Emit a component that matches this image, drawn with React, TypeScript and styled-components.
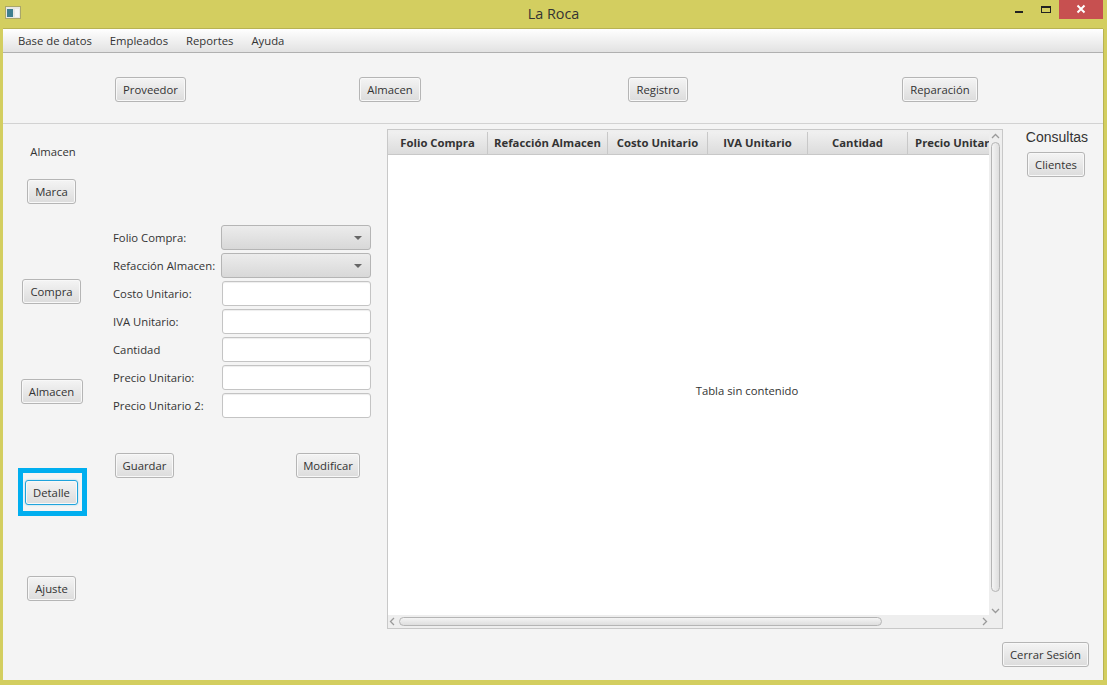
import React from "react";
import styled, { createGlobalStyle } from "styled-components";

const Global = createGlobalStyle`
  html, body { margin: 0; padding: 0; background: #d3ce60; }
  * { box-sizing: border-box; }
`;

const font = `"Open Sans", "Noto Sans", "Liberation Sans", sans-serif`;
const size = "11.3px";

const Frame = styled.div`
  width: 1107px;
  height: 685px;
  background: #d3ce60;
  display: flex;
  flex-direction: column;
  font-family: ${font};
  font-size: ${size};
  color: #333;
  overflow: hidden;
`;
const TitleBar = styled.div`
  height: 29px;
  flex: none;
  display: grid;
  grid-template-columns: 200px 1fr 200px;
  align-items: start;
`;
const TitleIcon = styled.svg`
  margin: 6px 0 0 5px;
  display: block;
`;
const Title = styled.div`
  text-align: center;
  font-size: 14.4px;
  line-height: 28px;
  color: #333;
`;
const Controls = styled.div`
  display: flex;
  justify-content: flex-end;
  padding-right: 4px;
`;
const Ctl = styled.div<{ $w: number; $red?: boolean }>`
  width: ${(p) => p.$w}px;
  height: 19px;
  background: ${(p) => (p.$red ? "#c75050" : "transparent")};
  display: flex;
  align-items: flex-start;
  justify-content: center;
`;
const Window = styled.div`
  width: 1100px;
  height: 651px;
  margin-left: 3px;
  background: #f4f4f4;
  display: flex;
  flex-direction: column;
  box-shadow: 0 -1px 0 #b8b353, 1px 0 0 #b8b353;
`;
const MenuBar = styled.div`
  height: 24px;
  flex: none;
  display: flex;
  padding-left: 15px;
  gap: 18px;
  align-items: center;
  background: linear-gradient(#ffffff, #e2e2e2);
  border-bottom: 1px solid #b0b0b0;
  color: #333;
  line-height: 23px;
`;
const MenuItem = styled.span``;
const Toolbar = styled.div`
  height: 71px;
  flex: none;
  padding: 24px 0 0 112px;
  display: grid;
  grid-template-columns: 244px 269px 274px auto;
  align-items: start;
  justify-items: start;
  border-bottom: 1px solid #d2d2d2;
`;
const Btn = styled.button<{ $w: number; $focus?: boolean }>`
  width: ${(p) => p.$w}px;
  height: 25px;
  padding: 0;
  font: ${size} ${font};
  color: #333;
  border-radius: 3px;
  background: linear-gradient(#f4f4f4, #dcdcdc);
  border: 1px solid ${(p) => (p.$focus ? "#1fa3dc" : "#b5b5b5")};
  box-shadow: inset 0 0 0 1px #f8f8f8${(p) => (p.$focus ? ", 0 0 2px #8fd3ef" : "")};
  white-space: nowrap;
`;
const Main = styled.div`
  flex: 1;
  display: flex;
  min-height: 0;
`;
const Nav = styled.div`
  width: 97px;
  flex: none;
  display: grid;
  grid-template-rows: 55px 100px 100px 89px 108px auto;
  justify-items: center;
  align-items: start;
`;
const NavTitle = styled.div`
  padding: 20px 0 0 3px;
  line-height: 16px;
  color: #333;
`;
const Highlight = styled.div`
  width: 69px;
  height: 48px;
  border: 5px solid #00aeef;
  margin-left: 2px;
  display: flex;
  align-items: center;
  justify-content: center;
  padding: 1px 2px 0 0;
`;
const Content = styled.div`
  flex: 1;
  display: flex;
  flex-direction: column;
  min-width: 0;
`;
const Upper = styled.div`
  display: flex;
  height: 505px;
  flex: none;
`;
const FormCol = styled.div`
  width: 287px;
  flex: none;
  padding: 101px 0 0 13px;
`;
const FormGrid = styled.div`
  display: grid;
  grid-template-columns: 108px 150px;
  grid-auto-rows: 25px;
  row-gap: 3px;
  align-items: center;
`;
const FieldLabel = styled.label`
  white-space: nowrap;
  color: #333;
`;
const Combo = styled.div`
  height: 25px;
  width: 150px;
  border-radius: 3px;
  border: 1px solid #b5b5b5;
  background: linear-gradient(#ececec, #d8d8d8);
  display: flex;
  align-items: center;
  justify-content: flex-end;
  padding-right: 8px;
`;
const Caret = styled.div`
  width: 0;
  height: 0;
  border-left: 4px solid transparent;
  border-right: 4px solid transparent;
  border-top: 4px solid #666;
`;
const TextField = styled.input`
  height: 25px;
  width: 149px;
  margin-left: 1px;
  padding: 0;
  background: #fff;
  border: 1px solid #c4c4c4;
  border-radius: 3px;
  box-shadow: inset 0 1px 1px #eee;
  outline: none;
`;
const FormActions = styled.div`
  margin-top: 35px;
  padding: 0 0 0 2px;
  width: 247px;
  display: flex;
  justify-content: space-between;
`;
const TableBox = styled.div`
  width: 616px;
  height: 500px;
  margin-top: 5px;
  flex: none;
  border: 1px solid #c8c8c8;
  background: #e9e9e9;
  display: grid;
  grid-template-columns: 1fr 13px;
  grid-template-rows: 1fr 13px;
`;
const TableInner = styled.div`
  display: flex;
  flex-direction: column;
  min-width: 0;
  min-height: 0;
  padding: 2px 0 0 0;
  background: #efefef;
  overflow: hidden;
`;
const HeadRow = styled.div`
  height: 23px;
  flex: none;
  display: flex;
  background: linear-gradient(#f0f0f0, #dcdcdc);
  border-bottom: 1px solid #c8c8c8;
  overflow: hidden;
`;
const HeadCell = styled.div<{ $w: number }>`
  width: ${(p) => p.$w}px;
  flex: none;
  text-align: center;
  font-weight: 700;
  line-height: 22px;
  color: #333;
  border-right: 1px solid #c8c8c8;
  white-space: nowrap;
`;
const Body = styled.div`
  flex: 1;
  background: #fff;
  display: flex;
  align-items: center;
  justify-content: center;
  color: #333;
  padding: 11px 0 0 117px;
`;
const VBar = styled.div`
  grid-row: 1 / 3;
  grid-column: 2;
  display: flex;
  flex-direction: column;
  align-items: center;
  background: #eeeeee;
`;
const ArrowSlot = styled.div`
  height: 12px;
  display: flex;
  align-items: center;
  justify-content: center;
  flex: none;
`;
const VThumb = styled.div`
  width: 9px;
  height: 450px;
  border: 1px solid #b5b5b5;
  border-radius: 5px;
  background: linear-gradient(90deg, #f4f4f4, #dedede);
`;
const Spacer = styled.div`
  flex: 1;
`;
const HBar = styled.div`
  grid-row: 2;
  grid-column: 1;
  display: flex;
  align-items: center;
  background: #eeeeee;
`;
const HThumb = styled.div`
  width: 483px;
  height: 9px;
  margin-left: 2px;
  border: 1px solid #b5b5b5;
  border-radius: 5px;
  background: linear-gradient(#f4f4f4, #dedede);
`;
const Side = styled.div`
  flex: 1;
  display: flex;
  flex-direction: column;
  align-items: center;
  padding: 5px 0 0 6px;
`;
const SideTitle = styled.div`
  font-family: "Liberation Sans", sans-serif;
  font-size: 14px;
  line-height: 17px;
  color: #333;
  margin: 0 0 6px 2px;
`;
const Footer = styled.div`
  flex: 1;
  display: flex;
  justify-content: flex-end;
  align-items: flex-start;
  padding: 13px 14px 0 0;
`;

const Chevron = ({ d }: { d: string }) => (
  <svg width={9} height={9} viewBox="0 0 9 9" fill="none" stroke="#9a9a9a" strokeWidth="1.3">
    <path d={d} />
  </svg>
);

const columns: [string, number][] = [
  ["Folio Compra", 100],
  ["Refacción Almacen", 120],
  ["Costo Unitario", 100],
  ["IVA Unitario", 100],
  ["Cantidad", 100],
  ["Precio Unitario", 100],
];

export default function App() {
  return (
    <Frame>
      <Global />
      <TitleBar>
        <TitleIcon width="16" height="13" viewBox="0 0 16 13">
          <rect x="0.5" y="0.5" width="15" height="12" fill="#e8e8e4" stroke="#a9a66a" />
          <rect x="2" y="3" width="6" height="8" fill="#3f7f8f" />
          <rect x="10" y="3" width="4" height="8" fill="#f6f6f6" />
        </TitleIcon>
        <Title>La Roca</Title>
        <Controls>
          <Ctl $w={26}>
            <svg width="10" height="19" viewBox="0 0 10 19">
              <rect x="0" y="11" width="8" height="2" fill="#222" />
            </svg>
          </Ctl>
          <Ctl $w={26}>
            <svg width="12" height="19" viewBox="0 0 12 19">
              <rect x="1.5" y="6.5" width="9" height="6" fill="none" stroke="#222" />
              <rect x="1" y="6" width="10" height="2" fill="#222" />
            </svg>
          </Ctl>
          <Ctl $w={44} $red>
            <svg width="10" height="19" viewBox="0 0 10 19">
              <path d="M1.5 5.5l7 7M8.5 5.5l-7 7" stroke="#fff" strokeWidth="2" />
            </svg>
          </Ctl>
        </Controls>
      </TitleBar>
      <Window>
        <MenuBar>
          <MenuItem>Base de datos</MenuItem>
          <MenuItem>Empleados</MenuItem>
          <MenuItem>Reportes</MenuItem>
          <MenuItem>Ayuda</MenuItem>
        </MenuBar>
        <Toolbar>
          <Btn $w={71}>Proveedor</Btn>
          <Btn $w={62}>Almacen</Btn>
          <Btn $w={60}>Registro</Btn>
          <Btn $w={76}>Reparación</Btn>
        </Toolbar>
        <Main>
          <Nav>
            <NavTitle>Almacen</NavTitle>
            <Btn $w={49}>Marca</Btn>
            <Btn $w={59}>Compra</Btn>
            <Btn $w={62}>Almacen</Btn>
            <Highlight>
              <Btn $w={53} $focus>Detalle</Btn>
            </Highlight>
            <Btn $w={49}>Ajuste</Btn>
          </Nav>
          <Content>
            <Upper>
              <FormCol>
                <FormGrid>
                  <FieldLabel>Folio Compra:</FieldLabel>
                  <Combo><Caret /></Combo>
                  <FieldLabel>Refacción Almacen:</FieldLabel>
                  <Combo><Caret /></Combo>
                  <FieldLabel>Costo Unitario:</FieldLabel>
                  <TextField />
                  <FieldLabel>IVA Unitario:</FieldLabel>
                  <TextField />
                  <FieldLabel>Cantidad</FieldLabel>
                  <TextField />
                  <FieldLabel>Precio Unitario:</FieldLabel>
                  <TextField />
                  <FieldLabel>Precio Unitario 2:</FieldLabel>
                  <TextField />
                </FormGrid>
                <FormActions>
                  <Btn $w={59}>Guardar</Btn>
                  <Btn $w={64}>Modificar</Btn>
                </FormActions>
              </FormCol>
              <TableBox>
                <TableInner>
                  <HeadRow>
                    {columns.map(([name, w]) => (
                      <HeadCell key={name} $w={w}>{name}</HeadCell>
                    ))}
                  </HeadRow>
                  <Body>Tabla sin contenido</Body>
                </TableInner>
                <VBar>
                  <ArrowSlot><Chevron d="M1 6l3.5-3.5L8 6" /></ArrowSlot>
                  <VThumb />
                  <Spacer />
                  <ArrowSlot><Chevron d="M1 3l3.5 3.5L8 3" /></ArrowSlot>
                  <ArrowSlot />
                </VBar>
                <HBar>
                  <Chevron d="M6 1L2.5 4.5 6 8" />
                  <HThumb />
                  <Spacer />
                  <Chevron d="M3 1l3.5 3.5L3 8" />
                </HBar>
              </TableBox>
              <Side>
                <SideTitle>Consultas</SideTitle>
                <Btn $w={58}>Clientes</Btn>
              </Side>
            </Upper>
            <Footer>
              <Btn $w={87}>Cerrar Sesión</Btn>
            </Footer>
          </Content>
        </Main>
      </Window>
    </Frame>
  );
}
